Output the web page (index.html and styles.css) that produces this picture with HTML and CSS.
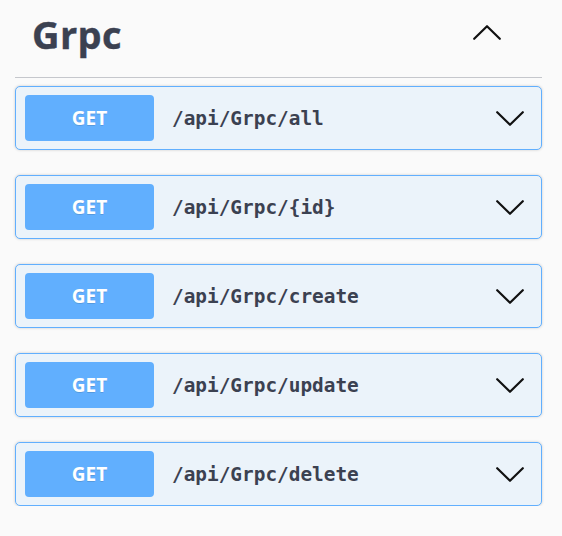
FILE: index.html
```html
<!DOCTYPE html>
<html>
<head>
<meta charset="utf-8">
<link rel="stylesheet" href="styles.css">
</head>
<body>
<div class="section">
  <div class="tag-header">
    <h3 class="tag-title">Grpc</h3>
    <svg class="tag-arrow" viewBox="0 0 28 15" width="28" height="15"><polyline points="1.2,13.8 14,1.2 26.8,13.8" fill="none" stroke="#111" stroke-width="2.2" stroke-linecap="round" stroke-linejoin="round"/></svg>
  </div>
  <div class="ops">
    <div class="op">
      <span class="method">GET</span>
      <span class="path">/api/Grpc/all</span>
      <svg class="op-arrow" viewBox="0 0 28 15" width="28" height="15"><polyline points="1.2,1.2 14,13.8 26.8,1.2" fill="none" stroke="#111" stroke-width="2.2" stroke-linecap="round" stroke-linejoin="round"/></svg>
    </div>
    <div class="op">
      <span class="method">GET</span>
      <span class="path">/api/Grpc/{id}</span>
      <svg class="op-arrow" viewBox="0 0 28 15" width="28" height="15"><polyline points="1.2,1.2 14,13.8 26.8,1.2" fill="none" stroke="#111" stroke-width="2.2" stroke-linecap="round" stroke-linejoin="round"/></svg>
    </div>
    <div class="op">
      <span class="method">GET</span>
      <span class="path">/api/Grpc/create</span>
      <svg class="op-arrow" viewBox="0 0 28 15" width="28" height="15"><polyline points="1.2,1.2 14,13.8 26.8,1.2" fill="none" stroke="#111" stroke-width="2.2" stroke-linecap="round" stroke-linejoin="round"/></svg>
    </div>
    <div class="op">
      <span class="method">GET</span>
      <span class="path">/api/Grpc/update</span>
      <svg class="op-arrow" viewBox="0 0 28 15" width="28" height="15"><polyline points="1.2,1.2 14,13.8 26.8,1.2" fill="none" stroke="#111" stroke-width="2.2" stroke-linecap="round" stroke-linejoin="round"/></svg>
    </div>
    <div class="op">
      <span class="method">GET</span>
      <span class="path">/api/Grpc/delete</span>
      <svg class="op-arrow" viewBox="0 0 28 15" width="28" height="15"><polyline points="1.2,1.2 14,13.8 26.8,1.2" fill="none" stroke="#111" stroke-width="2.2" stroke-linecap="round" stroke-linejoin="round"/></svg>
    </div>
  </div>
</div>
</body>
</html>
```
FILE: styles.css
```css
html, body {
  margin: 0;
  padding: 0;
  background: #fafafa;
}
body {
  font-family: "Open Sans", "Noto Sans", sans-serif;
  color: #3b4151;
}
.section {
  width: 527px;
  margin-left: 15px;
}
.tag-header {
  display: flex;
  align-items: flex-start;
  height: 77px;
  border-bottom: 1px solid #c5c7cc;
  padding: 0 41px 0 17px;
  box-sizing: content-box;
}
.tag-title {
  margin: 9px 0 0 0;
  font-size: 38px;
  line-height: 50px;
  font-weight: 700;
  letter-spacing: 0.4px;
  color: #3b4151;
  -webkit-text-stroke: 0.4px #3b4151;
}
.tag-arrow {
  margin-left: auto;
  margin-top: 25px;
  display: block;
}
.ops {
  display: flex;
  flex-direction: column;
  gap: 25px;
  padding-top: 8px;
}
.op {
  display: flex;
  align-items: center;
  height: 64px;
  box-sizing: border-box;
  padding: 8px 17px 8px 9px;
  border: 1px solid #61affe;
  border-radius: 5px;
  background: #ebf3fa;
  box-shadow: 0 0 3px rgba(0, 0, 0, 0.19);
}
.method {
  display: flex;
  align-items: center;
  justify-content: center;
  width: 129px;
  height: 46px;
  background: #61affe;
  border-radius: 4px;
  color: #fff;
  font-weight: 700;
  font-size: 19px;
  text-shadow: 0 1px 0 rgba(0, 0, 0, 0.12);
}
.path {
  margin-left: 18px;
  font-family: "DejaVu Sans Mono", monospace;
  font-weight: 700;
  font-size: 19.4px;
  color: #3b4151;
  flex: 1;
}
.op-arrow {
  display: block;
  margin-top: 1px;
}
```
